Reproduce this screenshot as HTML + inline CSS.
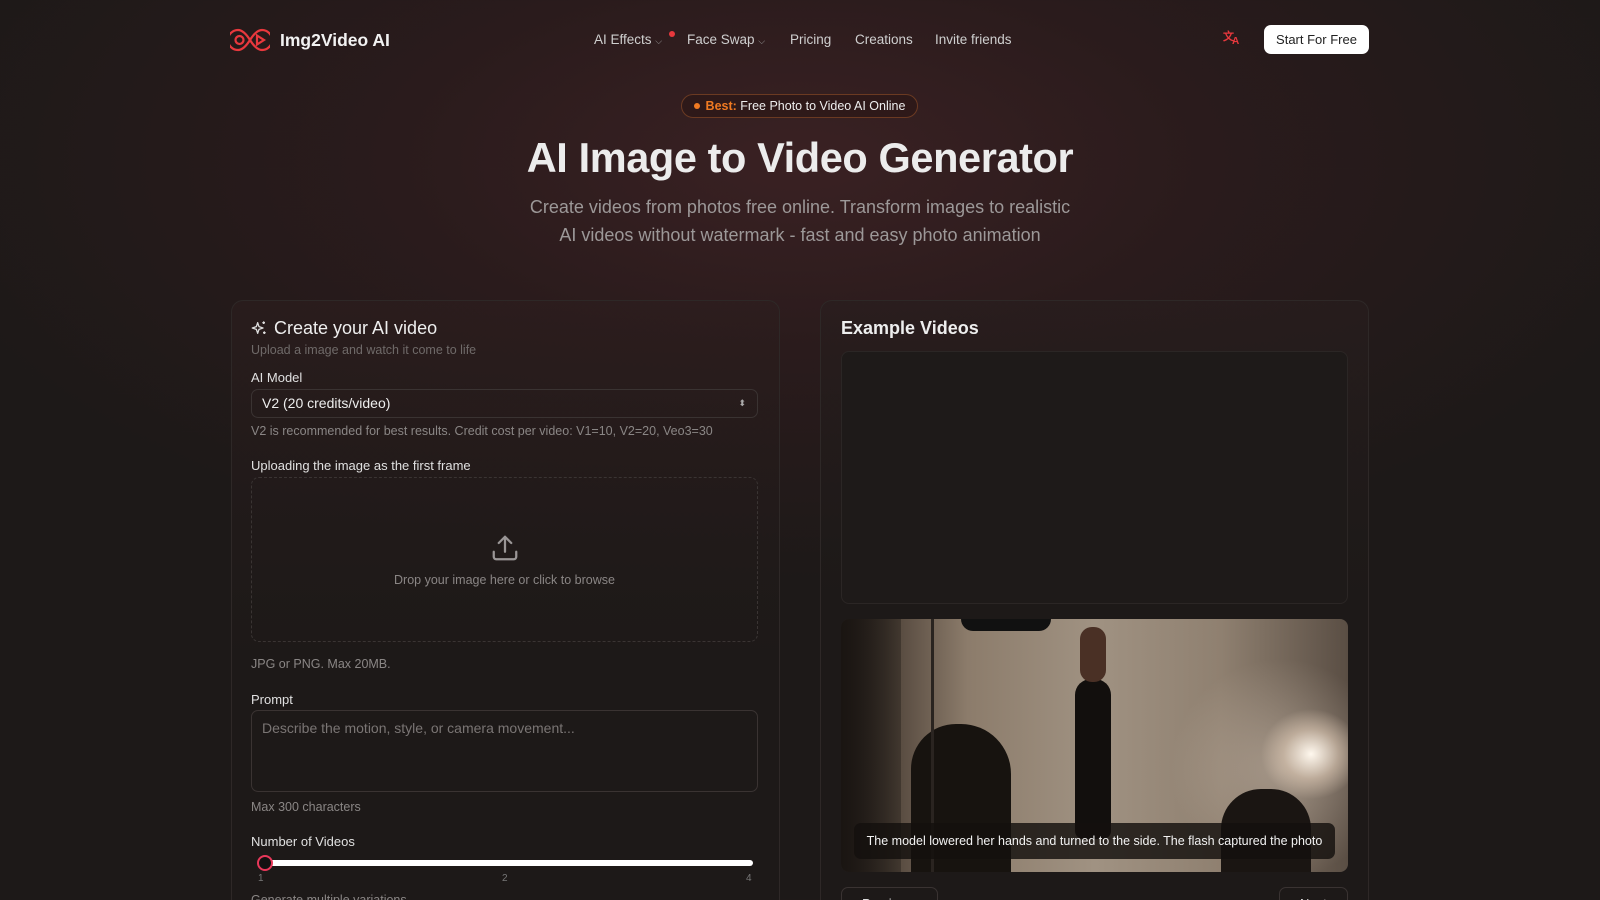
<!DOCTYPE html>
<html style="width:1600px;height:900px;overflow:hidden"><head><meta charset="utf-8">
<style>
*{box-sizing:border-box;margin:0;padding:0}
body{width:1600px;height:900px;overflow:hidden;font-family:"Liberation Sans",sans-serif;color:#e6e6e6;
background:radial-gradient(ellipse 900px 420px at 800px 160px,#3a2123 0%,#2a1b1c 45%,#1d1918 100%);background-color:#1d1918;position:relative}
.a{position:absolute}
.nav{font-size:13.5px;color:#cfcfcf;top:32px}
.card{position:absolute;top:300px;width:549px;height:600px;border:1px solid #2e2827;border-bottom:none;border-radius:12px 12px 0 0;background:linear-gradient(180deg,rgba(45,30,30,.55),rgba(29,25,24,.9) 60%)}
.lbl{font-size:13px;color:#e0e0e0;left:251px}
.hint{font-size:12.5px;color:#8a8685;left:251px}
</style></head><body>
<svg class="a" style="left:230px;top:27px" width="40" height="26" viewBox="0 0 40 26" fill="none" stroke="#e8383d" stroke-width="2.2">
<path d="M20 13 C15 5 11 3 8 3 A10 10 0 0 0 8 23 C11 23 15 21 20 13 C25 5 29 3 32 3 A10 10 0 0 1 32 23 C29 23 25 21 20 13Z"/>
<circle cx="9.5" cy="13" r="4"/><path d="M27 8.5 L34 13 L27 17.5Z"/></svg>
<div class="a" style="left:280px;top:30px;font-size:17.5px;font-weight:bold;color:#f2f2f2">Img2Video AI</div>
<div class="a nav" style="left:594px">AI Effects <span style="font-size:9px;color:#999">⌵</span></div>
<div class="a" style="left:669px;top:31px;width:6px;height:6px;border-radius:50%;background:#e8383d"></div>
<div class="a nav" style="left:687px">Face Swap <span style="font-size:9px;color:#999">⌵</span></div>
<div class="a nav" style="left:790px">Pricing</div>
<div class="a nav" style="left:855px">Creations</div>
<div class="a nav" style="left:935px">Invite friends</div>
<div class="a" style="left:1223px;top:32px;color:#e8383d;font-size:11px;font-weight:bold;line-height:1">文<span style="font-size:10px;position:relative;top:4px;left:-2px">A</span></div>
<div class="a" style="left:1264px;top:25px;width:105px;height:29px;border-radius:7px;background:#fff;color:#222;font-size:13px;text-align:center;line-height:29px">Start For Free</div>
<div class="a" style="left:681px;top:94px;width:237px;height:24px;border:1px solid #6b3a22;border-radius:12px;font-size:12.5px;line-height:22px;text-align:center;color:#eee;background:rgba(40,20,18,.5)"><span style="display:inline-block;width:6px;height:6px;border-radius:50%;background:#f07a22;margin-right:6px;vertical-align:1px"></span><b style="color:#f07a22;font-weight:bold">Best:</b> Free Photo to Video AI Online</div>
<div class="a" style="left:0;width:1600px;top:134px;text-align:center;font-size:41.5px;font-weight:bold;color:#ececec;letter-spacing:-.4px">AI Image to Video Generator</div>
<div class="a" style="left:0;width:1600px;top:193px;text-align:center;font-size:18px;line-height:28px;color:#9c9898">Create videos from photos free online. Transform images to realistic<br>AI videos without watermark - fast and easy photo animation</div>
<div class="card" style="left:231px"></div>
<svg class="a" style="left:251px;top:320px" width="16" height="16" viewBox="0 0 24 24" fill="none" stroke="#ddd" stroke-width="2" stroke-linejoin="round"><path d="M10 4 L12 10 L18 12 L12 14 L10 20 L8 14 L2 12 L8 10Z"/><path d="M19 2v4M17 4h4M20 17v4M18 19h4"/></svg>
<div class="a" style="left:274px;top:318px;font-size:18px;color:#eee">Create your AI video</div>
<div class="a hint" style="top:343px;color:#6f6a69">Upload a image and watch it come to life</div>
<div class="a lbl" style="top:370px">AI Model</div>
<div class="a" style="left:251px;top:389px;width:507px;height:29px;border:1px solid #3a3332;border-radius:7px;font-size:14px;line-height:27px;padding-left:10px;color:#eee">V2 (20 credits/video)<span style="position:absolute;right:11px;top:0;font-size:9px;color:#aaa;line-height:27px">⬍</span></div>
<div class="a hint" style="top:424px">V2 is recommended for best results. Credit cost per video: V1=10, V2=20, Veo3=30</div>
<div class="a lbl" style="top:458px">Uploading the image as the first frame</div>
<div class="a" style="left:251px;top:477px;width:507px;height:165px;border:1px dashed #3a3433;border-radius:8px"></div>
<svg class="a" style="left:490px;top:533px" width="30" height="30" viewBox="0 0 24 24" fill="none" stroke="#9a9696" stroke-width="1.8" stroke-linecap="round" stroke-linejoin="round"><path d="M12 15V3M7 8l5-5 5 5M3 15v4a2 2 0 0 0 2 2h14a2 2 0 0 0 2-2v-4"/></svg>
<div class="a" style="left:251px;width:507px;top:573px;text-align:center;font-size:12.5px;color:#8a8685">Drop your image here or click to browse</div>
<div class="a hint" style="top:657px">JPG or PNG. Max 20MB.</div>
<div class="a lbl" style="top:692px">Prompt</div>
<div class="a" style="left:251px;top:710px;width:507px;height:82px;border:1px solid #3a3332;border-radius:7px;font-size:14px;padding:9px 10px;color:#7a7574">Describe the motion, style, or camera movement...</div>
<div class="a hint" style="top:800px">Max 300 characters</div>
<div class="a lbl" style="top:834px">Number of Videos</div>
<div class="a" style="left:261px;top:860px;width:492px;height:6px;border-radius:3px;background:#fff"></div>
<div class="a" style="left:257px;top:855px;width:16px;height:16px;border-radius:50%;background:#111;border:2px solid #e8385a"></div>
<div class="a" style="left:258px;top:873px;font-size:10px;color:#777">1</div>
<div class="a" style="left:502px;top:873px;font-size:10px;color:#777">2</div>
<div class="a" style="left:746px;top:873px;font-size:10px;color:#777">4</div>
<div class="a hint" style="top:893px">Generate multiple variations</div>
<div class="card" style="left:820px;background:linear-gradient(180deg,rgba(40,30,30,.6),rgba(29,25,24,.95) 50%)"></div>
<div class="a" style="left:841px;top:318px;font-size:18px;font-weight:bold;color:#eee">Example Videos</div>
<div class="a" style="left:841px;top:351px;width:507px;height:253px;border:1px solid #2b2625;border-radius:8px;background:#1e1a19"></div>
<div class="a" style="left:841px;top:619px;width:507px;height:253px;border-radius:8px;overflow:hidden;background:linear-gradient(90deg,#2a2420 0%,#5a4d42 12%,#8c7c6b 25%,#a09282 50%,#8f8070 75%,#5a4e44 100%)">
 <div class="a" style="left:0;top:0;width:100%;height:100%;background:radial-gradient(ellipse 50px 45px at 470px 135px,#fff8ee,rgba(220,200,180,.6) 55%,transparent),radial-gradient(ellipse 110px 110px at 440px 150px,rgba(200,185,170,.55),transparent)"></div>
 <div class="a" style="left:0;top:0;width:60px;height:253px;background:linear-gradient(90deg,#1a1512,rgba(30,25,20,.4))"></div>
 <div class="a" style="left:70px;top:105px;width:100px;height:150px;border-radius:45px 50px 0 0;background:#17130f"></div>
 <div class="a" style="left:120px;top:0;width:90px;height:12px;border-radius:0 0 50px 50px;background:#111"></div>
 <div class="a" style="left:90px;top:0;width:3px;height:253px;background:#2a2420"></div>
 <div class="a" style="left:234px;top:60px;width:36px;height:160px;border-radius:16px 16px 8px 8px;background:#120f0d"></div>
 <div class="a" style="left:239px;top:8px;width:26px;height:55px;border-radius:12px;background:#4a3025"></div>
 <div class="a" style="left:380px;top:170px;width:90px;height:90px;border-radius:40px 40px 0 0;background:#1a1512"></div>
</div>
<div class="a" style="left:854px;top:823px;width:481px;height:36px;border-radius:7px;background:rgba(20,16,14,.82);color:#f2f2f2;font-size:12.5px;line-height:36px;text-align:center">The model lowered her hands and turned to the side. The flash captured the photo</div>
<div class="a" style="left:841px;top:887px;width:97px;height:30px;border:1px solid #3a3332;border-radius:7px;font-size:13px;padding:8px 20px;color:#ddd">Previous</div>
<div class="a" style="left:1279px;top:887px;width:69px;height:30px;border:1px solid #3a3332;border-radius:7px;font-size:13px;padding:8px 20px;color:#ddd">Next</div>
</body></html>
